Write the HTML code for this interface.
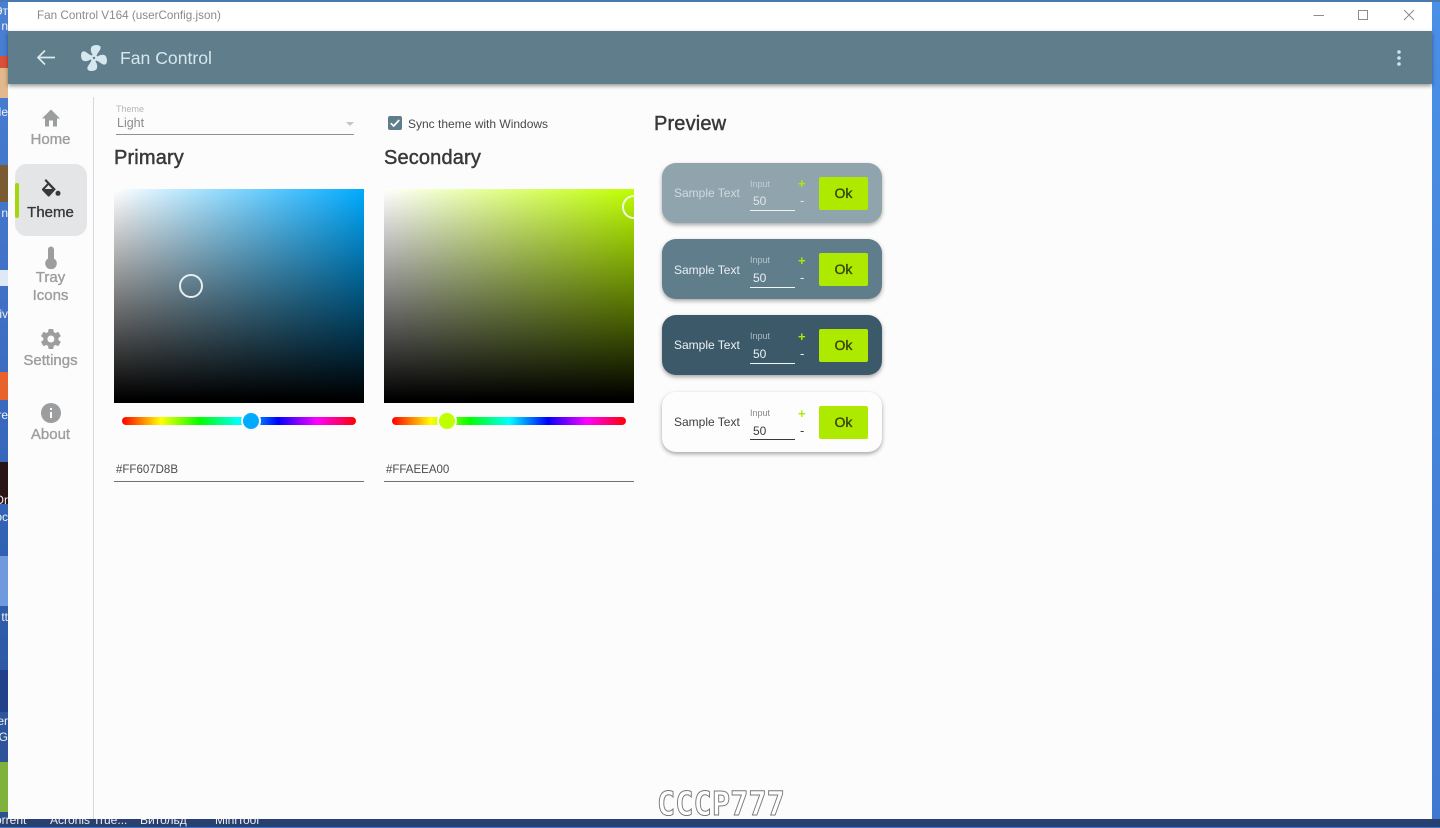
<!DOCTYPE html>
<html>
<head>
<meta charset="utf-8">
<style>
html,body{margin:0;padding:0;width:1440px;height:827px;overflow:hidden;background:#3f78d0;font-family:"Liberation Sans",sans-serif}
div,span{position:absolute;box-sizing:border-box;white-space:nowrap}
svg{position:absolute}
.nav{color:#9b9d9e;font-size:15px;-webkit-text-stroke:.35px currentColor;width:85px;left:8px;text-align:center;line-height:18px}
.h{font-size:20px;-webkit-text-stroke:.45px #37393a;letter-spacing:.15px;color:#37393a;line-height:24px}
.sv{top:189px;width:250px;height:214px;overflow:hidden}
.sv i{position:absolute;left:0;top:0;right:0;bottom:0;background:linear-gradient(to bottom,rgba(0,0,0,0),#000 98%)}
.hue{top:417px;width:234px;height:8px;border-radius:4px;background:linear-gradient(to right,#f00,#ff0 16.6%,#0f0 33.3%,#0ff 50%,#00f 66.6%,#f0f 83.3%,#f00)}
.thumb{width:20px;height:20px;border-radius:50%;border:2px solid #fafafa;top:411px}
.hex{top:462px;font-size:11.5px;color:#4a4c4d;line-height:16px;height:20px;width:250px;border-bottom:1px solid #6f7172;padding-left:2px}
.card{left:662px;width:220px;height:60px;border-radius:14px;box-shadow:0 2px 4px rgba(0,0,0,.35)}
.card .s{left:12px;top:23px;font-size:12px;line-height:15px}
.card .l{left:88px;top:15px;font-size:9px;line-height:12px;opacity:.62}
.card .v{left:91px;top:31px;font-size:12px;line-height:15px}
.card .u{left:88px;top:47px;width:45px;height:1px}
.card .p{left:136px;top:13px;font-size:13px;font-weight:bold;color:#aeea00;line-height:16px}
.card .m{left:138px;top:30px;font-size:13px;line-height:16px}
.card .b{left:157px;top:14px;width:49px;height:33px;background:#aeea00;border-radius:2px;color:#37470a;font-size:14px;-webkit-text-stroke:.35px #37470a;text-align:center;line-height:32px}
.d{left:0;width:8px;overflow:hidden;color:#f0f0f0;font-size:12px;line-height:14px;direction:rtl}
</style>
</head>
<body>
<div style="left:0;top:0;width:8px;height:827px;background:linear-gradient(to bottom,#4a80d4,#3f6fc4 40%,#2f5fb0 70%,#2c4f90)"></div>
<div style="left:0;top:56px;width:8px;height:12px;background:#d8503a"></div>
<div style="left:0;top:68px;width:8px;height:30px;background:#e2b98c"></div>
<div style="left:0;top:165px;width:8px;height:37px;background:#7a5a30"></div>
<div style="left:0;top:270px;width:8px;height:16px;background:#dfe8f5"></div>
<div style="left:0;top:372px;width:8px;height:28px;background:#e8622c"></div>
<div style="left:0;top:462px;width:8px;height:42px;background:#2a1416"></div>
<div style="left:0;top:556px;width:8px;height:50px;background:#6f9ade"></div>
<div style="left:0;top:670px;width:8px;height:42px;background:#23408a"></div>
<div style="left:0;top:762px;width:8px;height:50px;background:#7fb23c"></div>
<div class="d" style="top:4px">Эт</div><div class="d" style="top:19px">n</div><div class="d" style="top:105px">Cle</div><div class="d" style="top:206px">n</div><div class="d" style="top:307px">tiv</div><div class="d" style="top:408px">re</div><div class="d" style="top:493px">Or</div><div class="d" style="top:510px">oc</div><div class="d" style="top:610px">tt</div><div class="d" style="top:714px">er</div><div class="d" style="top:730px">G</div>
<div style="left:0;top:819px;width:1440px;height:8px;background:#28406f"></div>
<div style="left:-5px;top:812px;font-size:12px;color:#eee;line-height:16px">orrent</div>
<div style="left:50px;top:812px;font-size:12px;color:#eee;line-height:16px">Acronis True...</div>
<div style="left:140px;top:812px;font-size:12px;color:#eee;line-height:16px">Витольд</div>
<div style="left:215px;top:812px;font-size:12px;color:#eee;line-height:16px">MiniTool</div>
<div style="left:1432px;top:0;width:8px;height:827px;background:linear-gradient(to bottom,#4a90e8,#3f78d0);"></div>
<div style="left:1432px;top:819px;width:8px;height:8px;background:#28406f"></div>
<div style="left:0;top:0;width:1440px;height:2px;background:#4a78b0"></div>

<!-- window -->
<div style="left:8px;top:2px;width:1424px;height:817px;background:#fcfcfc"></div>
<div style="left:8px;top:2px;width:1424px;height:29px;background:#fff"></div>
<div style="left:37px;top:8px;font-size:11.7px;color:#8a8a8a;line-height:15px">Fan Control V164 (userConfig.json)</div>
<svg style="left:1310px;top:8px" width="120" height="16" viewBox="0 0 120 16" fill="none" stroke="#8c8c8c" stroke-width="1">
<path d="M3.500 7.500H14"/><path d="M48.500 2.500H57.500V11.500H48.500Z"/><path d="M94 2L104 12M104 2L94 12"/>
</svg>
<div style="left:8px;top:31px;width:1424px;height:53px;background:#607d8b;box-shadow:0 2px 4px rgba(0,0,0,.4)"></div>
<svg style="left:34px;top:46px" width="24" height="24" viewBox="0 0 24 24" fill="none" stroke="#dbeaf1" stroke-width="1.700"><path d="M21 11.500H4M11 4.500L4 11.500L11 18.500"/></svg>
<svg style="left:80px;top:44px" width="28" height="28" viewBox="0 0 28 28" fill="#d6e7ef">
<g id="bl"><path d="M14.500 13C12 10.500 9.500 6.500 11.500 2.800C13.500 .5 19.500 .3 20.500 2.800C21.500 5.800 17.500 8 16 13Z"/></g>
<path transform="rotate(90 14 14)" d="M14.500 13C12 10.500 9.500 6.500 11.500 2.800C13.500 .5 19.500 .3 20.500 2.800C21.500 5.800 17.500 8 16 13Z"/>
<path transform="rotate(180 14 14)" d="M14.500 13C12 10.500 9.500 6.500 11.500 2.800C13.500 .5 19.500 .3 20.500 2.800C21.500 5.800 17.500 8 16 13Z"/>
<path transform="rotate(270 14 14)" d="M14.500 13C12 10.500 9.500 6.500 11.500 2.800C13.500 .5 19.500 .3 20.500 2.800C21.500 5.800 17.500 8 16 13Z"/>
<circle cx="14" cy="14" r="3.500"/>
<circle cx="14" cy="14" r="1.200" fill="#607d8b"/>
</svg>
<div style="left:120px;top:47px;font-size:17.6px;color:#d6e7ef;line-height:22px">Fan Control</div>
<svg style="left:1395px;top:49px" width="8" height="18" viewBox="0 0 8 18" fill="#cfe6f2"><circle cx="4" cy="3" r="1.800"/><circle cx="4" cy="9" r="1.800"/><circle cx="4" cy="15" r="1.800"/></svg>

<!-- sidebar -->
<div style="left:93px;top:97px;width:1px;height:722px;background:#d9d9d9"></div>
<div style="left:15px;top:164px;width:72px;height:72px;border-radius:12px;background:#e4e5e6"></div>
<div style="left:15px;top:183px;width:4px;height:35px;border-radius:2px;background:#a4d60e"></div>
<svg style="left:39px;top:107px" width="24" height="22" viewBox="0 0 24 22" fill="#9b9d9e"><path d="M10 19.500V13.500H14V19.500H18V11.500H21L12 2.500L3 11.500H6V19.500Z"/></svg>
<div class="nav" style="top:131px">Home</div>
<svg style="left:39px;top:177px" width="24" height="22" viewBox="0 0 24 22" fill="#37393a"><path fill-rule="evenodd" d="M5.500 3.500L7 2L16.800 12.300L10.500 19.300C10 19.800 9.400 19.800 8.900 19.300L3.200 13.300C2.800 12.800 2.800 12.300 3.200 11.800L8.200 6.500ZM9.500 8L5.800 12H13.200Z"/><circle cx="19" cy="16.300" r="2.500"/></svg>
<div class="nav" style="top:204px;color:#37393a">Theme</div>
<svg style="left:39px;top:245px" width="24" height="24" viewBox="0 0 24 24" fill="#9b9d9e"><path d="M9 4.500A3 3 0 0 1 15 4.500V13.500A5.800 5.800 0 1 1 9 13.500Z"/></svg>
<div class="nav" style="top:269px">Tray</div>
<div class="nav" style="top:287px">Icons</div>
<svg style="left:39px;top:327px" width="24" height="24" viewBox="0 0 24 24" fill="#9b9d9e"><path fill-rule="evenodd" d="M19.400 13C19.500 12.300 19.500 11.700 19.400 11L21.500 9.400C21.700 9.200 21.800 8.900 21.600 8.700L19.600 5.300C19.500 5 19.200 4.900 18.900 5L16.400 6C15.900 5.600 15.300 5.300 14.700 5L14.300 2.400C14.300 2.200 14 2 13.800 2H10C9.800 2 9.500 2.200 9.500 2.400L9.100 5C8.500 5.300 7.900 5.600 7.400 6L4.900 5C4.600 4.900 4.300 5 4.200 5.300L2.200 8.700C2 8.900 2.100 9.200 2.300 9.400L4.400 11C4.300 11.700 4.300 12.300 4.400 13L2.300 14.600C2.100 14.800 2 15.100 2.200 15.300L4.200 18.700C4.300 19 4.600 19.100 4.900 19L7.400 18C7.900 18.400 8.500 18.700 9.100 19L9.500 21.600C9.500 21.800 9.800 22 10 22H13.800C14 22 14.300 21.800 14.300 21.600L14.700 19C15.300 18.700 15.900 18.400 16.400 18L18.900 19C19.200 19.100 19.500 19 19.600 18.700L21.600 15.300C21.800 15.100 21.700 14.800 21.500 14.600ZM11.900 15.500A3.500 3.500 0 1 1 11.900 8.500A3.500 3.500 0 0 1 11.900 15.500Z"/></svg>
<div class="nav" style="top:352px">Settings</div>
<svg style="left:39px;top:401px" width="24" height="24" viewBox="0 0 24 24" fill="#9b9d9e"><path fill-rule="evenodd" d="M12 2A10 10 0 1 0 12 22A10 10 0 0 0 12 2ZM13 17H11V11H13ZM13 9H11V7H13Z"/></svg>
<div class="nav" style="top:426px">About</div>

<!-- theme select -->
<div style="left:116px;top:104px;font-size:9px;color:#b5b6b7;line-height:11px">Theme</div>
<div style="left:117px;top:115px;font-size:12.500px;color:#8b8c8d;line-height:16px">Light</div>
<div style="left:346px;top:122px;width:0;height:0;border-left:4px solid transparent;border-right:4px solid transparent;border-top:4px solid #c4c5c6"></div>
<div style="left:116px;top:134px;width:238px;height:1px;background:#8f9091"></div>
<div style="left:388px;top:116px;width:14px;height:14px;border-radius:2px;background:#607d8b"></div>
<svg style="left:388px;top:116px" width="14" height="14" viewBox="0 0 14 14" fill="none" stroke="#fff" stroke-width="1.700"><path d="M2.800 7.200L5.700 10L11.200 4"/></svg>
<div style="left:408px;top:117px;font-size:12px;color:#47494a;line-height:15px">Sync theme with Windows</div>

<div class="h" style="left:114px;top:146px">Primary</div>
<div class="h" style="left:384px;top:146px">Secondary</div>
<div class="h" style="left:654px;top:112px">Preview</div>

<!-- pickers -->
<div class="sv" style="left:114px;background:linear-gradient(to right,#fff,#00aaff)"><i></i>
<div style="left:65px;top:85px;width:24px;height:24px;border:2px solid #e6eef2;border-radius:50%"></div></div>
<div class="sv" style="left:384px;background:linear-gradient(to right,#fff,#bfff00)"><i></i>
<div style="left:238px;top:6px;width:24px;height:24px;border:2px solid #f2f8e0;border-radius:50%"></div></div>
<div class="hue" style="left:122px"></div>
<div class="thumb" style="left:241px;background:#00aaff"></div>
<div class="hue" style="left:392px"></div>
<div class="thumb" style="left:437px;background:#bfff00"></div>
<div class="hex" style="left:114px">#FF607D8B</div>
<div class="hex" style="left:384px">#FFAEEA00</div>

<!-- preview cards -->
<div class="card" style="top:163px;background:#90a4ae;color:#dfe7eb">
<span class="s" style="opacity:.8">Sample Text</span><span class="l">Input</span><span class="v">50</span><span class="u" style="background:#eef3f5"></span><span class="p">+</span><span class="m">-</span><span class="b">Ok</span></div>
<div class="card" style="top:239px;background:#607d8b;color:#e8eff2">
<span class="s" style="top:24px">Sample Text</span><span class="l">Input</span><span class="v" style="top:32px">50</span><span class="u" style="top:48px;background:#f2f6f8"></span><span class="p" style="top:14px">+</span><span class="m" style="top:31px">-</span><span class="b">Ok</span></div>
<div class="card" style="top:315px;background:#3b5968;color:#eef3f5">
<span class="s">Sample Text</span><span class="l">Input</span><span class="v" style="top:32px">50</span><span class="u" style="top:48px;background:#f2f6f8"></span><span class="p" style="top:14px">+</span><span class="m" style="top:31px">-</span><span class="b">Ok</span></div>
<div class="card" style="top:392px;background:#fdfdfd;color:#3c3e3f">
<span class="s">Sample Text</span><span class="l">Input</span><span class="v" style="top:32px">50</span><span class="u" style="top:47px;background:#37393a"></span><span class="p" style="top:14px">+</span><span class="m" style="top:31px">-</span><span class="b">Ok</span></div>

<!-- watermark -->
<div style="left:657px;top:786px;font-family:'DejaVu Sans Mono',monospace;font-weight:bold;font-size:33px;line-height:36px;color:#fff;-webkit-text-stroke:1px #77797a;transform:scaleX(.92);transform-origin:left top">CCCP777</div>
</body>
</html>
